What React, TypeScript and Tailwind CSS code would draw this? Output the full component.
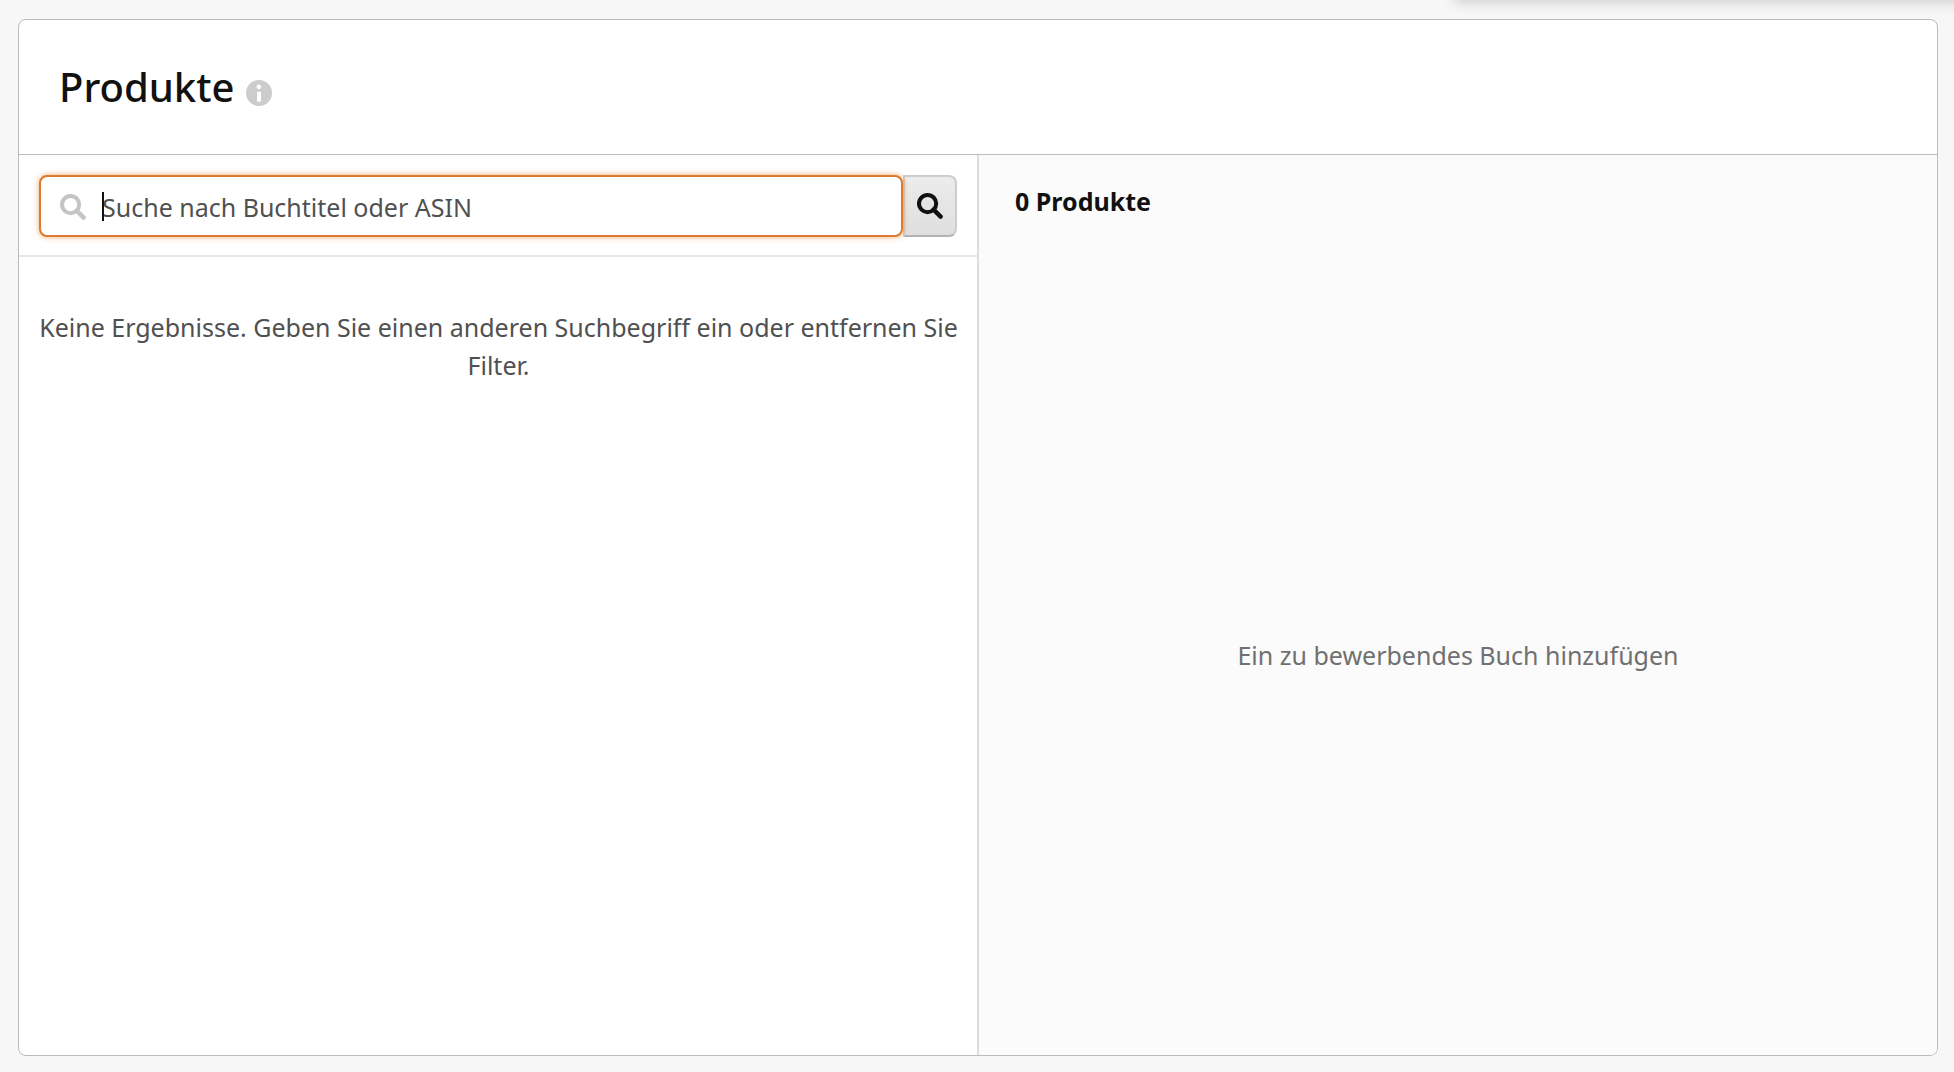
import type { SVGProps } from 'react'

function SearchIcon(props: SVGProps<SVGSVGElement>) {
  return (
    <svg viewBox="0 0 26 26" fill="none" stroke="currentColor" strokeWidth="4" aria-hidden="true" {...props}>
      <circle cx="10.6" cy="10.6" r="8.6" />
      <path d="M16.6 16.6l7 7" strokeWidth="4.4" strokeLinecap="round" />
    </svg>
  )
}

function InfoIcon(props: SVGProps<SVGSVGElement>) {
  return (
    <svg viewBox="0 0 26 26" aria-hidden="true" {...props}>
      <circle cx="13" cy="13" r="13" fill="currentColor" />
      <circle cx="12.8" cy="6.8" r="2.4" fill="#fff" />
      <rect x="11" y="11.8" width="4" height="10" rx="1" fill="#fff" />
    </svg>
  )
}

function ProductSearch() {
  return (
    <form
      role="search"
      className="flex border-b-2 border-[#e7e7e7] pt-5 pr-[21px] pb-[18px] pl-5"
      onSubmit={(event) => event.preventDefault()}
    >
      <div className="relative min-w-0 flex-1">
        <SearchIcon className="absolute top-[19px] left-[21px] h-[26px] w-[26px] text-[#c4c4c4]" />
        <input
          type="text"
          aria-label="Suche nach Buchtitel oder ASIN"
          placeholder="Suche nach Buchtitel oder ASIN"
          className="block h-[62px] w-full rounded-lg border-2 border-[#dc7b2f] bg-white pt-0.5 pr-4 pl-[61px] text-[25px] text-[#111] caret-transparent shadow-[0_0_5px_1px_rgba(228,121,17,0.45)] outline-none placeholder:text-[#505050] placeholder:opacity-100"
        />
        <span className="absolute top-[17px] left-[63px] h-[29px] w-0.5 bg-[#111]" aria-hidden="true" />
      </div>
      <button
        type="submit"
        aria-label="Suchen"
        className="flex h-[62px] w-[54px] items-center justify-center rounded-r-lg border-2 border-[#cdcdcd] border-b-[#b3b3b3] bg-linear-to-b from-[#ececec] to-[#dfdfdf] text-[#111]"
      >
        <SearchIcon className="h-[26px] w-[26px]" />
      </button>
    </form>
  )
}

export default function App() {
  return (
    <main className="relative flex min-h-screen flex-col overflow-hidden bg-[#f7f7f7] pt-[19px] pr-4 pb-4 pl-[18px] font-['Noto_Sans',sans-serif] text-[#111]">
      <section className="flex flex-1 flex-col overflow-hidden rounded-lg border border-[#bbb] bg-white">
        <header className="flex h-[135px] items-center gap-3 border-b border-[#bbb] px-10">
          <h1 className="text-[40px] leading-[54px] font-medium">Produkte</h1>
          <InfoIcon className="mt-3 h-[26px] w-[26px] text-[#ccc]" />
        </header>
        <div className="grid flex-1 grid-cols-2">
          <div className="flex flex-col">
            <ProductSearch />
            <p className="px-5 pt-[51px] text-center text-[25px] leading-[38px] text-[#505050]">
              Keine Ergebnisse. Geben Sie einen anderen Suchbegriff ein oder entfernen Sie Filter.
            </p>
          </div>
          <div className="-ml-px flex flex-col border-l-2 border-[#ddd] bg-[#fbfbfb]">
            <h2 className="px-9 pt-[27px] text-[25px] leading-[38px] font-bold">0 Produkte</h2>
            <p className="pt-[416px] text-center text-[25px] leading-[38px] text-[#707070]">
              Ein zu bewerbendes Buch hinzufügen
            </p>
          </div>
        </div>
      </section>
      {/* lower edge of the floating panel above the card */}
      <div
        className="absolute -top-10 -right-10 left-[1455px] h-10 shadow-[0_2px_14px_rgba(0,0,0,0.18)]"
        aria-hidden="true"
      />
    </main>
  )
}
